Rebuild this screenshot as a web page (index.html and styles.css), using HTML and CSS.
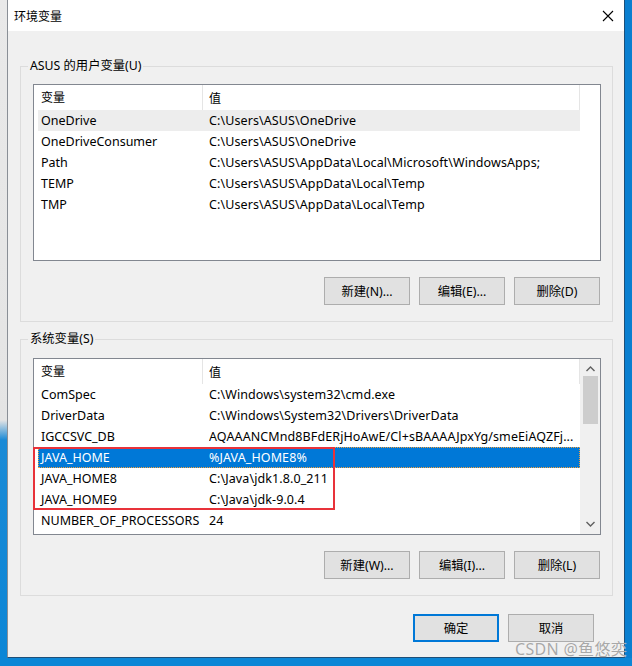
FILE: index.html
```html
<!DOCTYPE html>
<html lang="zh-CN">
<head>
<meta charset="utf-8">
<title>环境变量</title>
<link rel="stylesheet" href="styles.css">
</head>
<body>
<div class="desk">
  <div class="strip-left"></div>
  <div class="win">
    <div class="titlebar">
      <span class="title">环境变量</span>
      <svg class="close" width="12" height="12" viewBox="0 0 12 12"><path d="M1 1 L11 11 M11 1 L1 11" stroke="#000" stroke-width="1.1" fill="none"/></svg>
    </div>
    <div class="content">
      <fieldset class="group g1">
        <legend>ASUS 的用户变量(U)</legend>
        <div class="list">
          <div class="main">
            <div class="lhead"><div class="c1">变量</div><div class="c2">值</div></div>
            <div class="row hover"><div class="c1">OneDrive</div><div class="c2">C:\Users\ASUS\OneDrive</div></div>
            <div class="row"><div class="c1">OneDriveConsumer</div><div class="c2">C:\Users\ASUS\OneDrive</div></div>
            <div class="row"><div class="c1">Path</div><div class="c2">C:\Users\ASUS\AppData\Local\Microsoft\WindowsApps;</div></div>
            <div class="row"><div class="c1">TEMP</div><div class="c2">C:\Users\ASUS\AppData\Local\Temp</div></div>
            <div class="row"><div class="c1">TMP</div><div class="c2">C:\Users\ASUS\AppData\Local\Temp</div></div>
          </div>
          <div class="gutter"></div>
        </div>
        <div class="btns">
          <button class="btn">新建(N)...</button>
          <button class="btn">编辑(E)...</button>
          <button class="btn">删除(D)</button>
        </div>
      </fieldset>
      <fieldset class="group g2">
        <legend>系统变量(S)</legend>
        <div class="list">
          <div class="main">
            <div class="lhead"><div class="c1">变量</div><div class="c2">值</div></div>
            <div class="row"><div class="c1">ComSpec</div><div class="c2">C:\Windows\system32\cmd.exe</div></div>
            <div class="row"><div class="c1">DriverData</div><div class="c2">C:\Windows\System32\Drivers\DriverData</div></div>
            <div class="row"><div class="c1">IGCCSVC_DB</div><div class="c2">AQAAANCMnd8BFdERjHoAwE/Cl+sBAAAAJpxYg/smeEiAQZFj...</div></div>
            <div class="mark">
              <div class="row sel"><div class="c1">JAVA_HOME</div><div class="c2">%JAVA_HOME8%</div></div>
              <div class="row"><div class="c1">JAVA_HOME8</div><div class="c2">C:\Java\jdk1.8.0_211</div></div>
              <div class="row"><div class="c1">JAVA_HOME9</div><div class="c2">C:\Java\jdk-9.0.4</div></div>
              <div class="redbox"></div>
            </div>
            <div class="row"><div class="c1">NUMBER_OF_PROCESSORS</div><div class="c2">24</div></div>
          </div>
          <div class="scrollbar">
            <svg class="arrow" width="9" height="6" viewBox="0 0 9 6"><path d="M0.5 5 L4.5 1 L8.5 5" stroke="#606060" stroke-width="1.4" fill="none"/></svg>
            <div class="thumb"></div>
            <div class="track"></div>
            <svg class="arrow" width="9" height="6" viewBox="0 0 9 6"><path d="M0.5 1 L4.5 5 L8.5 1" stroke="#606060" stroke-width="1.4" fill="none"/></svg>
          </div>
        </div>
        <div class="btns">
          <button class="btn">新建(W)...</button>
          <button class="btn">编辑(I)...</button>
          <button class="btn">删除(L)</button>
        </div>
      </fieldset>
      <div class="footer">
        <button class="btn primary">确定</button>
        <button class="btn">取消</button>
      </div>
    </div>
  </div>
  <div class="strip-right"></div>
</div>
<div class="watermark">CSDN @鱼悠奕</div>
</body>
</html>
```

FILE: styles.css
```css
html, body {
  margin: 0;
  padding: 0;
}
body {
  width: 632px;
  height: 666px;
  overflow: hidden;
  background: #0c86d6;
  font-family: "Noto Sans", "Noto Sans CJK SC", sans-serif;
  font-size: 12px;
  color: #000;
  position: relative;
}
.desk {
  display: grid;
  grid-template-columns: 7px 618px 7px;
  height: 658px;
}
.strip-left {
  background: linear-gradient(to bottom, #e9e9e9 0, #e4e4e4 420px, #1a8ad6 440px, #0c86d6 100%);
}
.strip-right {
  background: #0a7fd0;
}
.win {
  background: #f0f0f0;
  border-left: 1px solid #8a8f96;
  border-right: 1px solid #1e4f78;
  border-bottom: 1px solid #1e4f78;
  display: flex;
  flex-direction: column;
}
.titlebar {
  height: 31px;
  background: #fff;
  display: flex;
  align-items: center;
  justify-content: space-between;
  padding: 0 10px 0 6px;
  flex: none;
}
.title {
  font-family: "Noto Sans CJK SC", sans-serif;
  font-size: 12px;
  line-height: 16px;
}
.close {
  display: block;
}
.content {
  padding: 27px 11px 0 12px;
}
.group {
  margin: 0;
  padding: 10px 11px 16px 12px;
  border: 1px solid #dcdcdc;
  min-width: 0;
}
.group legend {
  padding: 0 2px;
  margin-left: -5px;
  line-height: 16px;
  font-family: "Noto Sans", "Noto Sans CJK SC", sans-serif;
  font-size: 12.3px;
}
.g2 {
  margin-top: 9px;
  padding-top: 11px;
}
.list {
  height: 175px;
  border: 1px solid #828790;
  background: #fff;
  display: flex;
}
.main {
  width: 546px;
  flex: none;
}
.gutter {
  flex: 1;
}
.lhead {
  display: flex;
  height: 25px;
  align-items: center;
  border-right: 1px solid #e5e5e5;
  box-sizing: border-box;
}
.lhead .c1 {
  width: 169px;
  box-sizing: border-box;
  padding-left: 7px;
  height: 25px;
  line-height: 24px;
  border-right: 1px solid #e5e5e5;
  font-family: "Noto Sans CJK SC", sans-serif;
}
.lhead .c2 {
  padding-left: 6px;
  line-height: 24px;
  font-family: "Noto Sans CJK SC", sans-serif;
}
.row {
  display: flex;
  height: 21px;
  line-height: 21px;
  margin-left: 4px;
  white-space: nowrap;
  box-sizing: border-box;
  font-size: 12.5px;
}
.row .c1 {
  width: 171px;
  padding-left: 3px;
  box-sizing: border-box;
  flex: none;
  overflow: hidden;
}
.row .c2 {
  overflow: hidden;
  letter-spacing: 0.1px;
}
.row.hover {
  background: #ededed;
}
.row.sel {
  background: #0078d7;
  color: #fff;
  outline: 1px dotted #f0a040;
  outline-offset: -1px;
}
.mark {
  position: relative;
}
.redbox {
  position: absolute;
  left: -1px;
  top: 0;
  width: 302px;
  height: 63px;
  border: 2px solid #e8323a;
  box-sizing: border-box;
  pointer-events: none;
}
.scrollbar {
  flex: 1;
  background: #f0f0f0;
  display: flex;
  flex-direction: column;
  align-items: center;
  padding: 0 1px;
}
.arrow {
  display: block;
  margin: 7px 0 4px;
  flex: none;
}
.scrollbar .arrow:last-child {
  margin: 4px 0 7px;
}
.thumb {
  width: 15px;
  height: 48px;
  background: #cdcdcd;
  flex: none;
}
.track {
  flex: 1;
}
.btns {
  display: flex;
  justify-content: flex-end;
  gap: 9px;
  margin-top: 16px;
  padding-right: 1px;
}
.btn {
  width: 86px;
  height: 28px;
  background: #e1e1e1;
  border: 1px solid #adadad;
  font-family: "Noto Sans", "Noto Sans CJK SC", sans-serif;
  font-size: 12.3px;
  color: #000;
  padding: 0;
  margin: 0;
}
.btn.primary {
  border: 2px solid #0078d7;
}
.footer {
  display: flex;
  justify-content: flex-end;
  gap: 9px;
  margin-top: 18px;
  padding-right: 19px;
}
.watermark {
  position: absolute;
  left: 515px;
  top: 636px;
  font-family: "Noto Sans", "Noto Sans CJK SC", sans-serif;
  font-size: 16px;
  color: #a8a8a8;
  text-shadow: 0 0 1px #fff;
  letter-spacing: 0.3px;
}
```
